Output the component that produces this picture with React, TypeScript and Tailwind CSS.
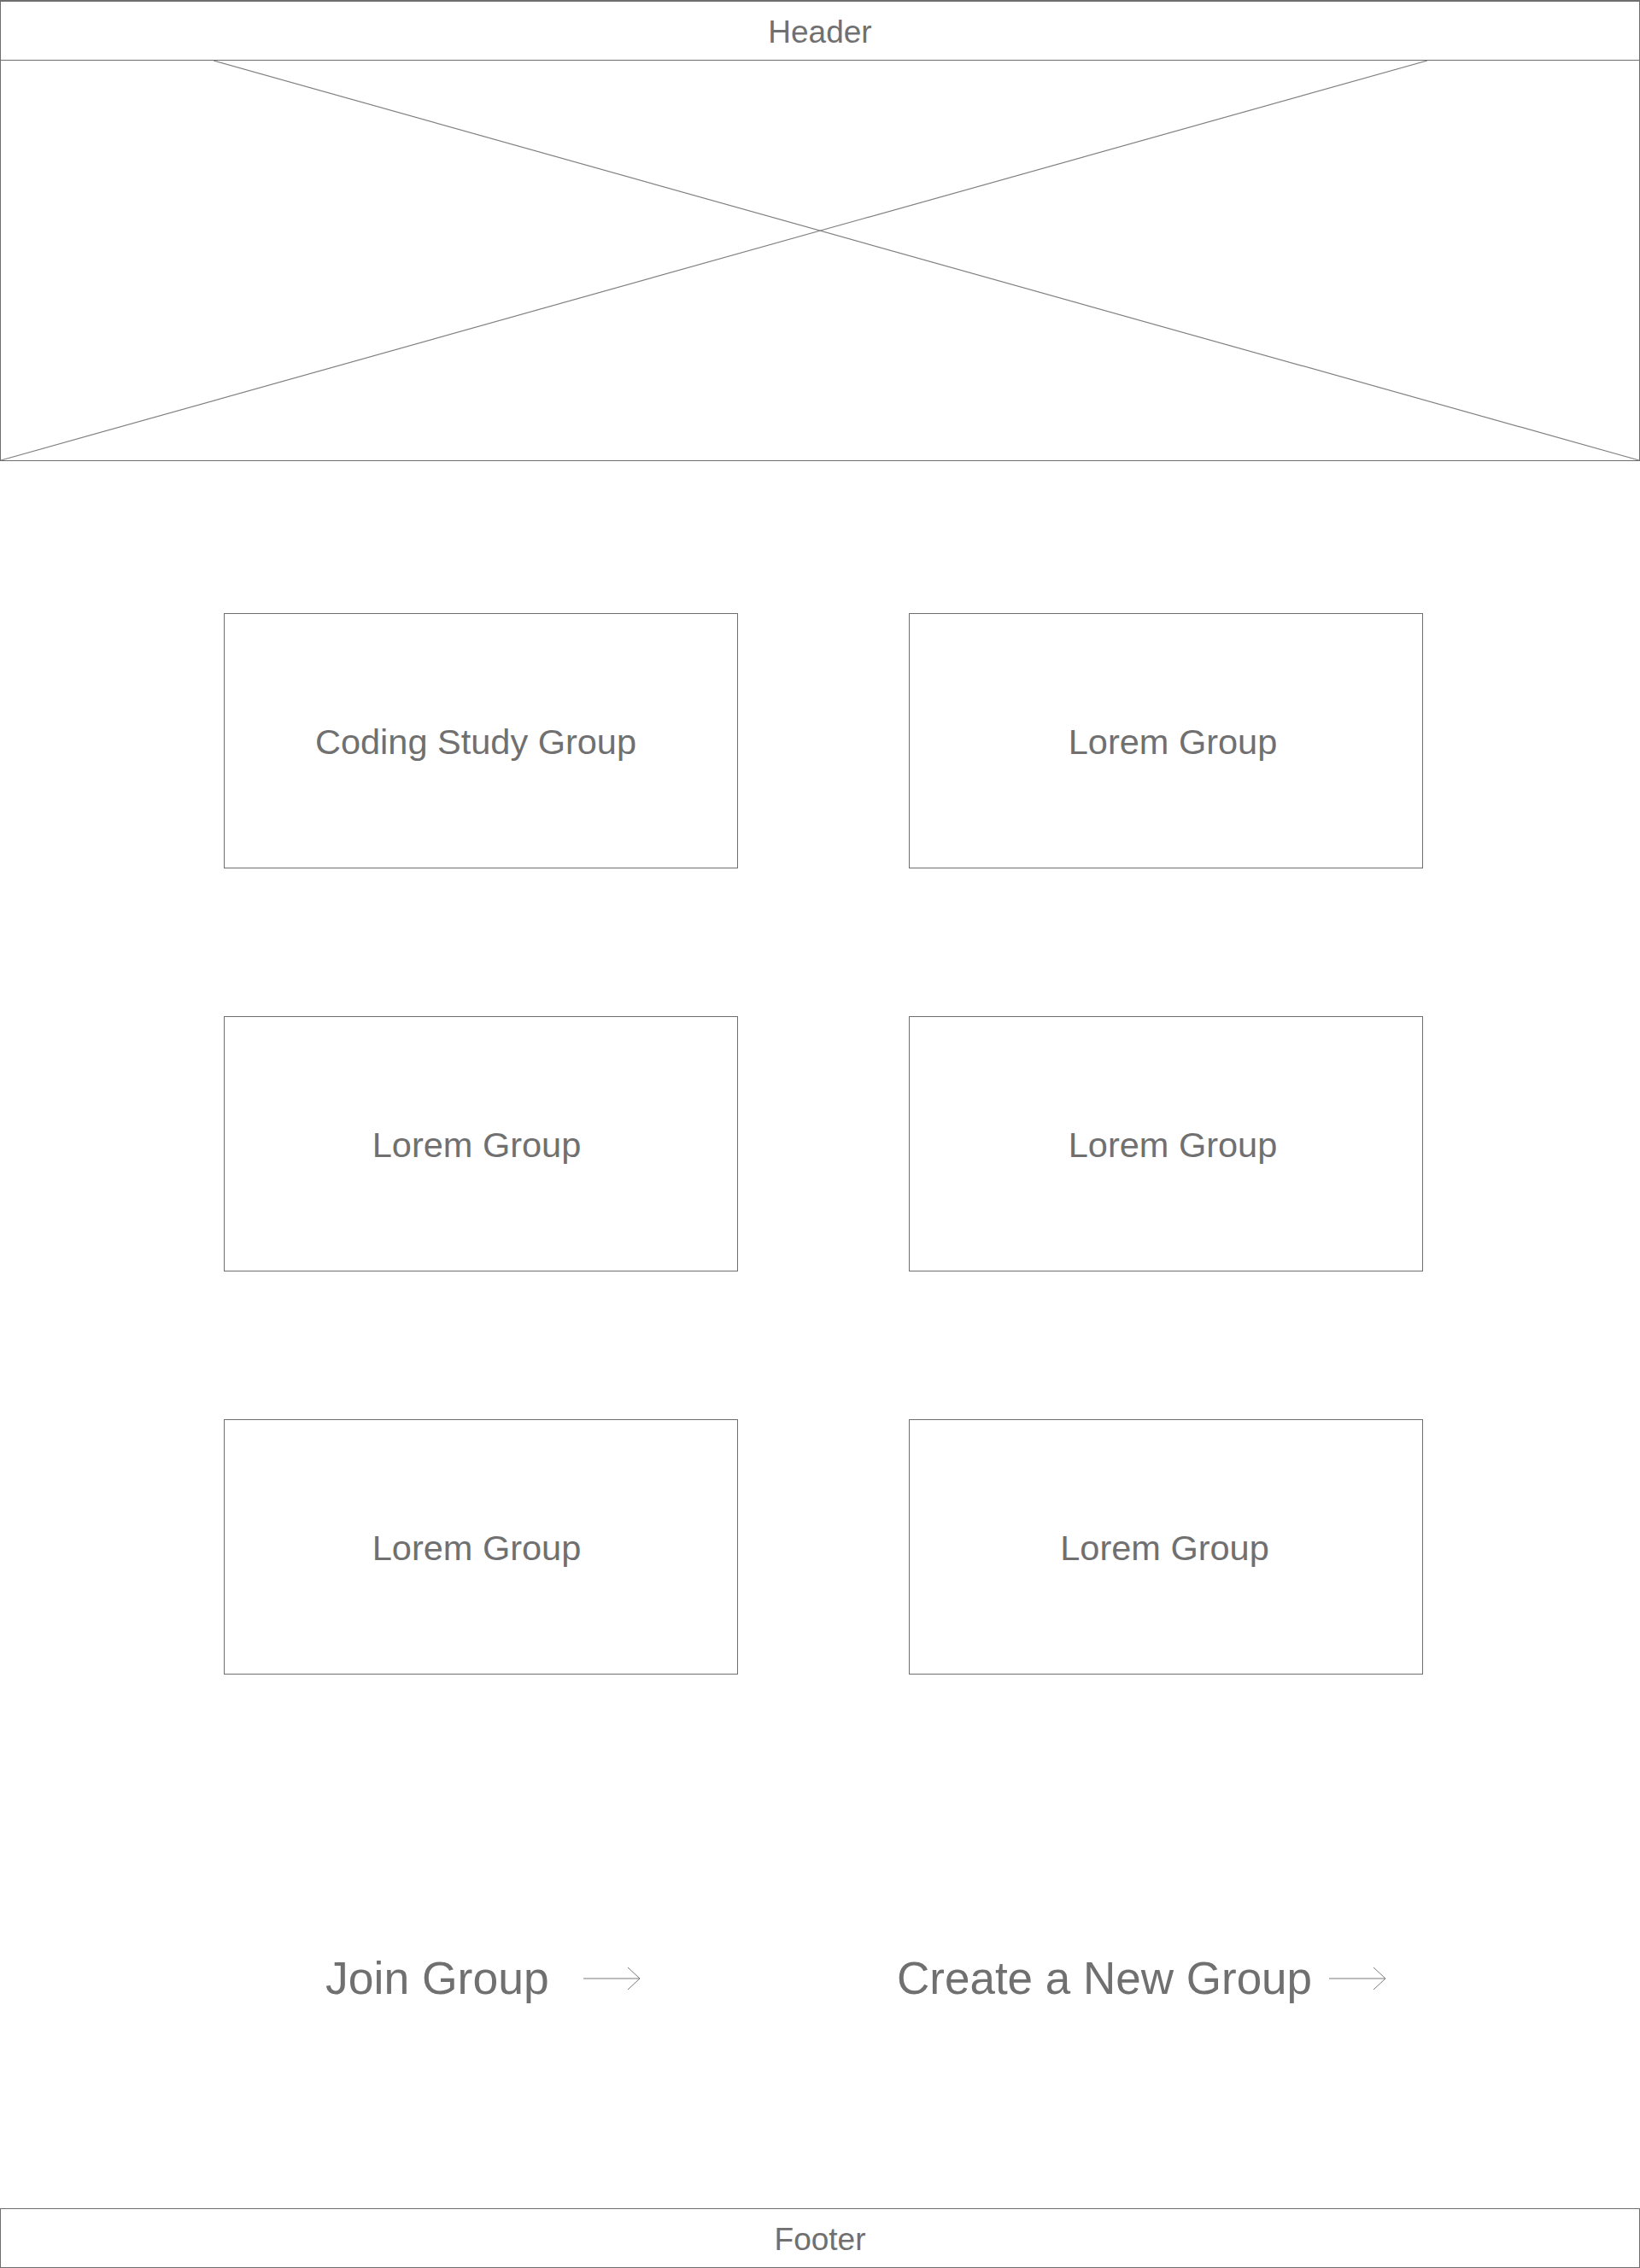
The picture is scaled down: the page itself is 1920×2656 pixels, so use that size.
const groups = [
  { name: "Coding Study Group", nudge: "pr-[12px]" },
  { name: "Lorem Group", nudge: "pl-[16px]" },
  { name: "Lorem Group", nudge: "pr-[10px]" },
  { name: "Lorem Group", nudge: "pl-[16px]" },
  { name: "Lorem Group", nudge: "pr-[10px]" },
  { name: "Lorem Group", nudge: "pr-[3px]" },
];

function Arrow() {
  return (
    <svg width="68" height="28" viewBox="0 0 68 28" fill="none" className="shrink-0">
      <path d="M0 14 H66 M52 1 L66 14 L52 27" stroke="#7a7a7a" strokeWidth="1" />
    </svg>
  );
}

function GroupCard({ name, nudge }: any) {
  return (
    <div
      className={
        "h-[299px] pt-[3px] border border-[#6e6e6e] flex items-center justify-center text-[41.5px] leading-none text-[#707070] " +
        nudge
      }
    >
      {name}
    </div>
  );
}

function App() {
  return (
    <div className="w-[1920px] min-h-[2656px] bg-white flex flex-col font-['Liberation_Sans',Arial,sans-serif] text-[#707070]">
      <header className="h-[71px] pt-[3px] border-t-2 border-x border-b border-[#6e6e6e] flex items-center justify-center text-[37px]">
        Header
      </header>

      <div className="h-[469px] border-x border-b border-[#6e6e6e]">
        <svg width="100%" height="100%" viewBox="0 0 1918 468" preserveAspectRatio="none">
          <line x1="249" y1="0" x2="1918" y2="468" stroke="#808080" strokeWidth="1.2" />
          <line x1="1670" y1="0" x2="0" y2="468" stroke="#808080" strokeWidth="1.2" />
        </svg>
      </div>

      <main className="mt-[178px] pl-[262px] grid grid-cols-[602px_602px] gap-x-[200px] gap-y-[173px]">
        {groups.map((g, i) => (
          <GroupCard key={i} name={g.name} nudge={g.nudge} />
        ))}
      </main>

      <div className="mt-[329px] pl-[381px] flex items-center leading-none">
        <div className="w-[669px] flex items-center text-[53.5px]">
          <span>Join Group</span>
          <span className="ml-[40px]">
            <Arrow />
          </span>
        </div>
        <div className="flex items-center text-[53px]">
          <span>Create a New Group</span>
          <span className="ml-[20px]">
            <Arrow />
          </span>
        </div>
      </div>

      <footer className="mt-auto h-[70px] pt-[3px] border border-[#6e6e6e] flex items-center justify-center text-[37px]">
        Footer
      </footer>
    </div>
  );
}

export default App;
